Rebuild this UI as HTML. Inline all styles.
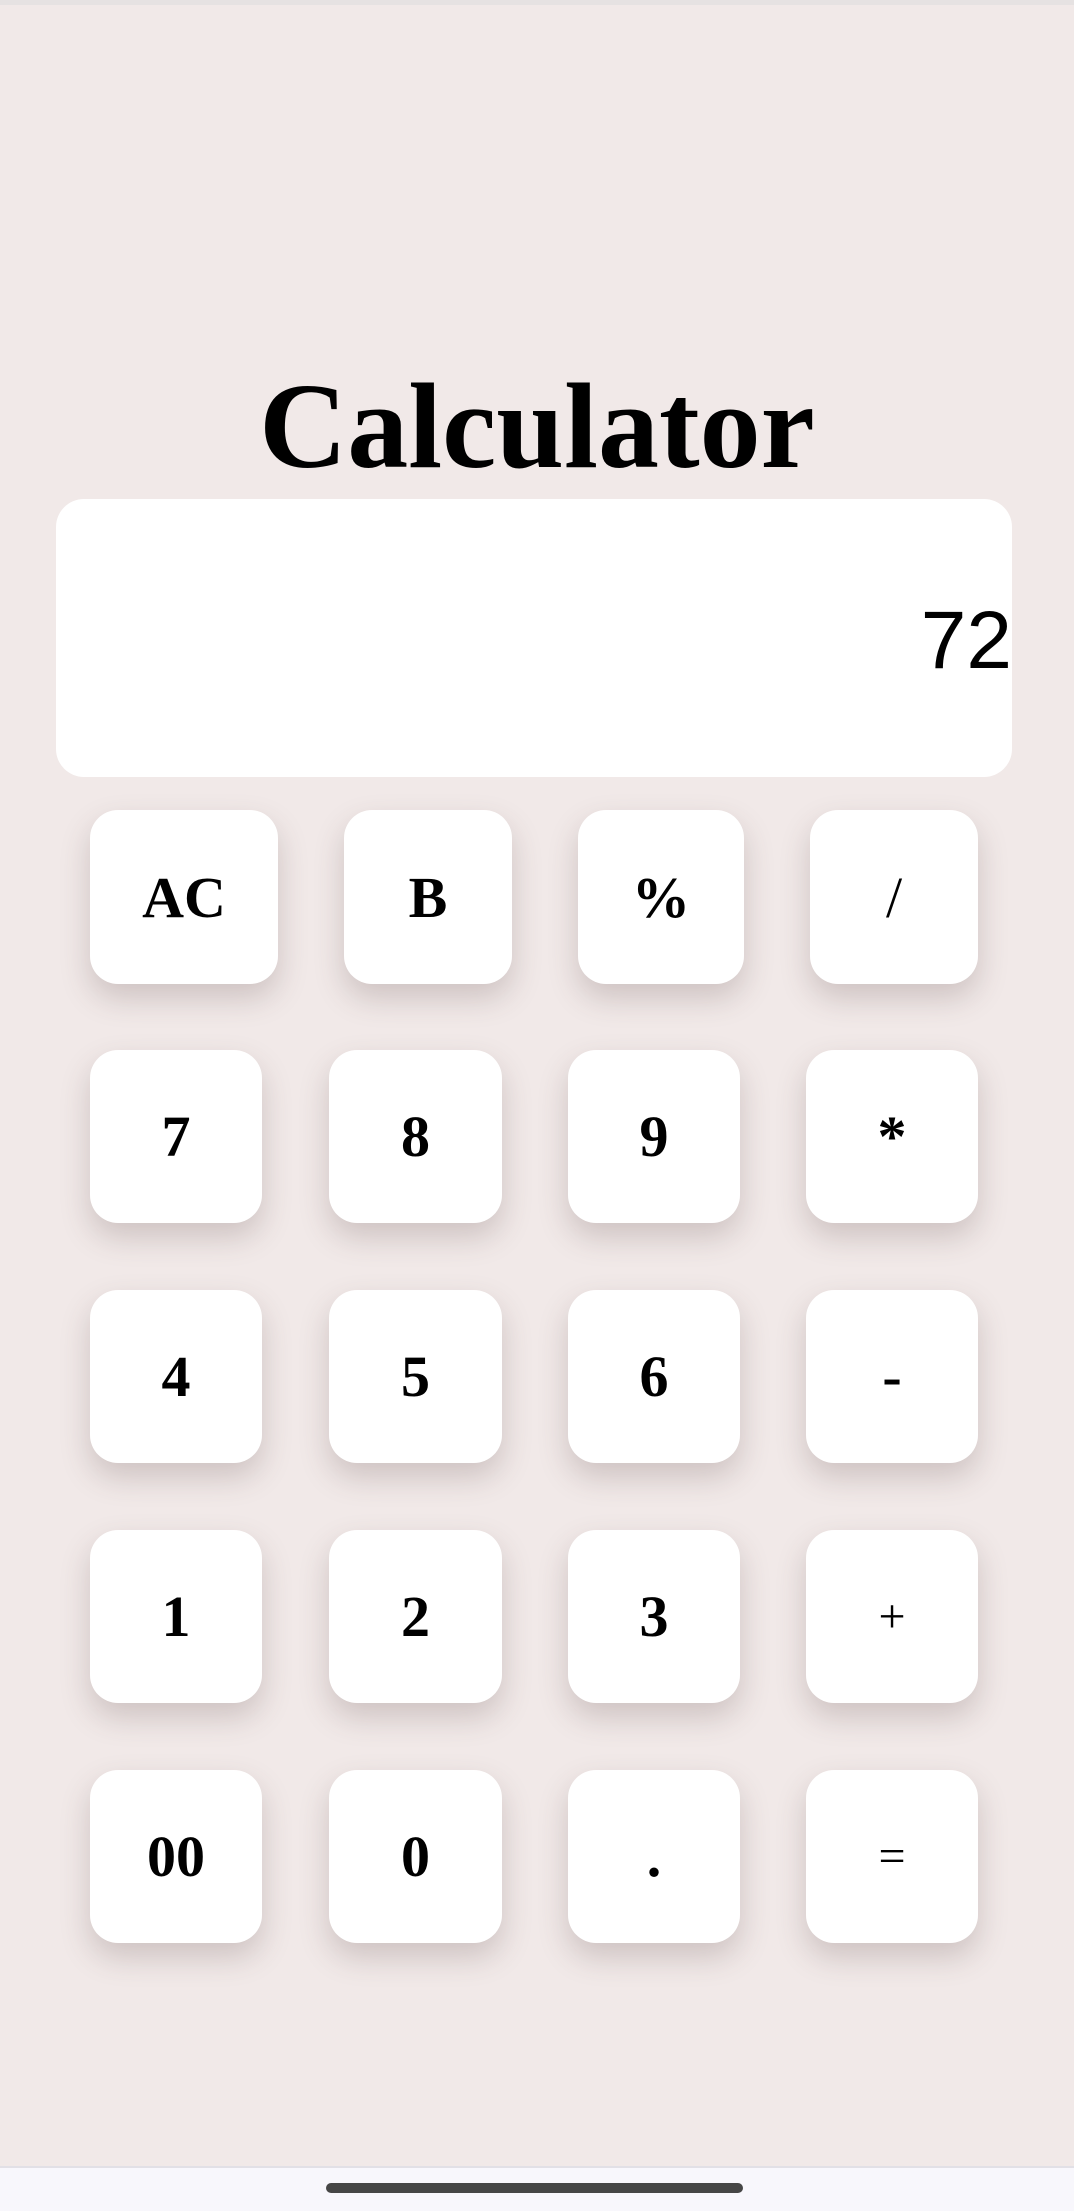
<!DOCTYPE html>
<html><head><meta charset="utf-8"><style>
*{margin:0;padding:0;box-sizing:border-box}
html,body{width:1074px;height:2211px;overflow:hidden;background:#f1e9e8}
body{position:relative;font-family:"Liberation Serif",serif}
.top{position:absolute;left:0;top:0;width:1074px;height:5px;background:#e6e2e2}
h1{position:absolute;left:0;width:1074px;top:352px;text-align:center;font-size:122px;font-weight:bold;line-height:150px;color:#000}
.disp{position:absolute;left:56px;top:499px;width:956px;height:278px;background:#fff;border-radius:28px}
.num{position:absolute;right:62px;top:596px;font-family:"Liberation Sans",sans-serif;font-size:82px;line-height:90px;color:#000}
.b{position:absolute;background:#fff;border-radius:28px;box-shadow:0 14px 30px rgba(80,60,60,0.22);display:flex;align-items:center;justify-content:center;font-weight:bold;font-size:58px;color:#000}
.nav{position:absolute;left:0;top:2166px;width:1074px;height:45px;background:#f8f7fc;border-top:2px solid #e2e0e6}
.handle{position:absolute;left:326px;top:2183px;width:417px;height:10px;border-radius:5px;background:#464646}
</style></head><body>
<div class="top"></div>
<h1>Calculator</h1>
<div class="disp"></div>
<div class="num">72</div>

<div class="b" style="left:90px;top:810px;width:188px;height:174px">AC</div>
<div class="b" style="left:344px;top:810px;width:168px;height:174px">B</div>
<div class="b" style="left:578px;top:810px;width:166px;height:174px">%</div>
<div class="b" style="left:810px;top:810px;width:168px;height:174px;font-weight:normal">/</div>

<div class="b" style="left:90px;top:1050px;width:172px;height:173px">7</div>
<div class="b" style="left:329px;top:1050px;width:173px;height:173px">8</div>
<div class="b" style="left:568px;top:1050px;width:172px;height:173px">9</div>
<div class="b" style="left:806px;top:1050px;width:172px;height:173px">*</div>

<div class="b" style="left:90px;top:1290px;width:172px;height:173px">4</div>
<div class="b" style="left:329px;top:1290px;width:173px;height:173px">5</div>
<div class="b" style="left:568px;top:1290px;width:172px;height:173px">6</div>
<div class="b" style="left:806px;top:1290px;width:172px;height:173px">-</div>

<div class="b" style="left:90px;top:1530px;width:172px;height:173px">1</div>
<div class="b" style="left:329px;top:1530px;width:173px;height:173px">2</div>
<div class="b" style="left:568px;top:1530px;width:172px;height:173px">3</div>
<div class="b" style="left:806px;top:1530px;width:172px;height:173px;font-weight:normal;font-size:48px">+</div>

<div class="b" style="left:90px;top:1770px;width:172px;height:173px">00</div>
<div class="b" style="left:329px;top:1770px;width:173px;height:173px">0</div>
<div class="b" style="left:568px;top:1770px;width:172px;height:173px">.</div>
<div class="b" style="left:806px;top:1770px;width:172px;height:173px;font-weight:normal;font-size:48px">=</div>

<div class="nav"></div>
<div class="handle"></div>
</body></html>
